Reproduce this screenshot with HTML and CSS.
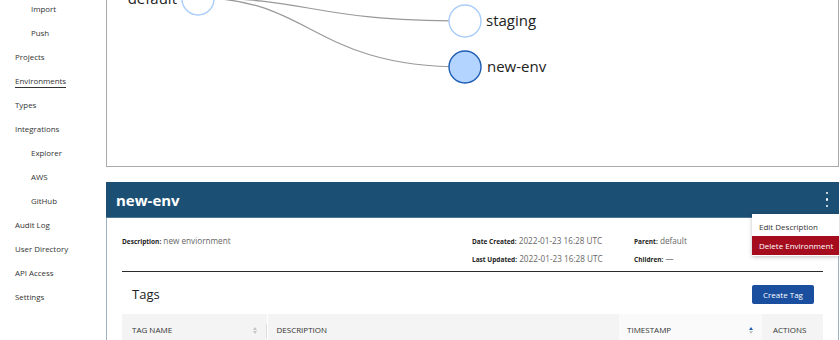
FILE: index.html
```html
<!DOCTYPE html>
<html lang="en">
<head>
    <meta charset="UTF-8">
    <title>Environments</title>
    <link rel="stylesheet" href="styles.css">
</head>
<body>
    <div class="layout">
        <nav class="sidebar">
            <ul class="nav">
                <li class="sub">Import</li>
                <li class="sub">Push</li>
                <li>Projects</li>
                <li class="active"><span>Environments</span></li>
                <li>Types</li>
                <li>Integrations</li>
                <li class="sub">Explorer</li>
                <li class="sub">AWS</li>
                <li class="sub">GitHub</li>
                <li>Audit Log</li>
                <li>User Directory</li>
                <li>API Access</li>
                <li>Settings</li>
            </ul>
        </nav>

        <main class="main">
            <div class="graph">
                <svg class="tree" viewBox="107 0 731 166" width="731" height="166">
                    <path class="link" d="M198,-2 C312,-2 312,21 465,21"/>
                    <path class="link" d="M198,-2 C312,-2 312,67 465,67"/>
                    <circle class="node" cx="198" cy="-1" r="16"/>
                    <text class="label" x="177" y="4" text-anchor="end">default</text>
                    <circle class="node" cx="465" cy="21" r="16"/>
                    <text class="label" x="486" y="26">staging</text>
                    <circle class="node selected" cx="465" cy="67" r="16"/>
                    <text class="label" x="487" y="72">new-env</text>
                </svg>
            </div>

            <section class="env-card">
                <header class="env-header">
                    <h2>new-env</h2>
                    <button class="kebab" aria-label="menu"><i></i><i></i><i></i></button>
                    <ul class="menu">
                        <li>Edit Description</li>
                        <li class="danger">Delete Environment</li>
                    </ul>
                </header>

                <div class="env-body">
                    <div class="info">
                        <div class="info-col desc">
                            <p><b>Description:</b> new enviornment</p>
                        </div>
                        <div class="info-col dates">
                            <p><b>Date Created:</b> 2022-01-23 16:28 UTC</p>
                            <p><b>Last Updated:</b> 2022-01-23 16:28 UTC</p>
                        </div>
                        <div class="info-col family">
                            <p><b>Parent:</b> default</p>
                            <p><b>Children:</b> &mdash;</p>
                        </div>
                    </div>

                    <div class="tags">
                        <div class="tags-head">
                            <h3>Tags</h3>
                            <button class="btn-primary">Create Tag</button>
                        </div>
                        <table class="tag-table">
                            <thead>
                                <tr>
                                    <th class="col-name">TAG NAME <span class="sort"><i class="up"></i><i class="down"></i></span></th>
                                    <th class="col-desc">DESCRIPTION</th>
                                    <th class="col-time sorted">TIMESTAMP <span class="sort on"><i class="up"></i><i class="down"></i></span></th>
                                    <th class="col-actions">ACTIONS</th>
                                </tr>
                            </thead>
                        </table>
                    </div>
                </div>
            </section>
        </main>
    </div>
</body>
</html>
```

FILE: styles.css
```css
*{
  margin: 0;
  padding: 0;
  box-sizing: border-box;
}

body{
  font-family: "Open Sans", "Noto Sans", sans-serif;
  color: #333;
  background: #fff;
  width: 840px;
  height: 340px;
  overflow: hidden;
}

.layout{
  display: flex;
}

/* sidebar */
.sidebar{
  width: 106px;
  flex-shrink: 0;
}

.nav{
  list-style: none;
  margin-top: -3px;
}

.nav li{
  height: 24px;
  line-height: 24px;
  padding-left: 15px;
  font-size: 7.9px;
  color: #333;
}

.nav li.sub{
  padding-left: 31px;
}

.nav li.active span{
  padding-bottom: 1px;
  border-bottom: 1px solid #333;
}

/* main */
.main{
  width: 733px;
}

.graph{
  height: 167px;
  border: 1px solid #aaa;
  border-top: none;
  overflow: hidden;
}

.tree{
  display: block;
}

.link{
  fill: none;
  stroke: #999;
  stroke-width: 1.2;
}

.node{
  fill: #fff;
  stroke: #a9cdf8;
  stroke-width: 1.4;
}

.node.selected{
  fill: #b2d4ff;
  stroke: #1d5cb3;
}

.label{
  font-size: 15px;
  fill: #222;
}

/* environment card */
.env-card{
  margin-top: 15px;
  border: 1px solid #9fb2c2;
  border-top: none;
  height: 200px;
}

.env-header{
  position: relative;
  display: flex;
  justify-content: space-between;
  align-items: center;
  height: 36px;
  padding: 0 9px 0 10px;
  background: #1c4f74;
  border-bottom: 1px solid #4d7696;
  margin: 0 -1px;
}

.env-header h2{
  color: #fff;
  font-size: 15px;
  font-weight: 700;
}

.kebab{
  display: flex;
  flex-direction: column;
  gap: 4px;
  background: none;
  border: none;
  padding: 2px 2px;
}

.kebab i{
  display: block;
  width: 2.5px;
  height: 2.5px;
  border-radius: 50%;
  background: #fff;
}

.menu{
  position: absolute;
  top: 32px;
  right: 0;
  width: 87px;
  list-style: none;
  background: #fff;
  box-shadow: 0 1px 4px rgba(0,0,0,0.25);
  padding: 3px 0 1px;
  z-index: 2;
}

.menu li{
  font-size: 8px;
  padding: 0 7px;
  height: 19px;
  line-height: 19px;
  color: #333;
  white-space: nowrap;
}

.menu li.danger{
  background: #a50d1f;
  color: #fff;
}

.env-body{
  padding: 0 15px;
}

.info{
  display: flex;
  padding-top: 15px;
  height: 54px;
  border-bottom: 1px solid #2b2b2b;
}

.info-col p{
  font-size: 8.2px;
  color: #666;
  height: 18px;
  line-height: 16px;
}

.info-col b{
  font-size: 6.5px;
  font-weight: 700;
  color: #222;
}

.desc{
  width: 350px;
}

.dates{
  width: 162px;
}

.tags{
  padding-top: 12px;
}

.tags-head{
  display: flex;
  justify-content: space-between;
  align-items: center;
  padding: 0 9px 0 10px;
  height: 20px;
}

.tags-head h3{
  font-size: 13px;
  font-weight: 400;
  color: #222;
}

.btn-primary{
  width: 62px;
  height: 19px;
  background: #1a4f9f;
  color: #fff;
  border: none;
  border-radius: 2px;
  font-family: inherit;
  font-size: 8px;
}

.tag-table{
  width: 100%;
  margin-top: 10px;
  border-collapse: collapse;
}

.tag-table th{
  text-align: left;
  vertical-align: top;
  font-size: 8px;
  font-weight: 400;
  color: #333;
  height: 32px;
  line-height: 32px;
  padding: 0 10px;
  background: #f4f4f4;
  position: relative;
}

.tag-table th.sorted{
  background: #fafafa;
}

.col-name{
  width: 145px;
  border-right: 1px solid #fff;
}

.col-name::after{
  content: "";
  position: absolute;
  right: 0;
  top: 10px;
  width: 1px;
  height: 14px;
  background: #ddd;
}

.col-desc{
  width: 352px;
  padding-left: 9px !important;
}

.col-time{
  width: 143px;
  padding-left: 8px !important;
}

.col-actions{
  padding-left: 11px !important;
}

.sort{
  position: absolute;
  right: 10px;
  top: 13px;
  display: flex;
  flex-direction: column;
  gap: 1px;
}

.col-time .sort{
  right: 9px;
}

.sort i{
  display: block;
  width: 0;
  height: 0;
  border-left: 2.5px solid transparent;
  border-right: 2.5px solid transparent;
}

.sort .up{
  border-bottom: 3px solid #c4c4c4;
}

.sort .down{
  border-top: 3px solid #c4c4c4;
}

.sort.on .up{
  border-bottom-color: #1d5cb3;
}
```
